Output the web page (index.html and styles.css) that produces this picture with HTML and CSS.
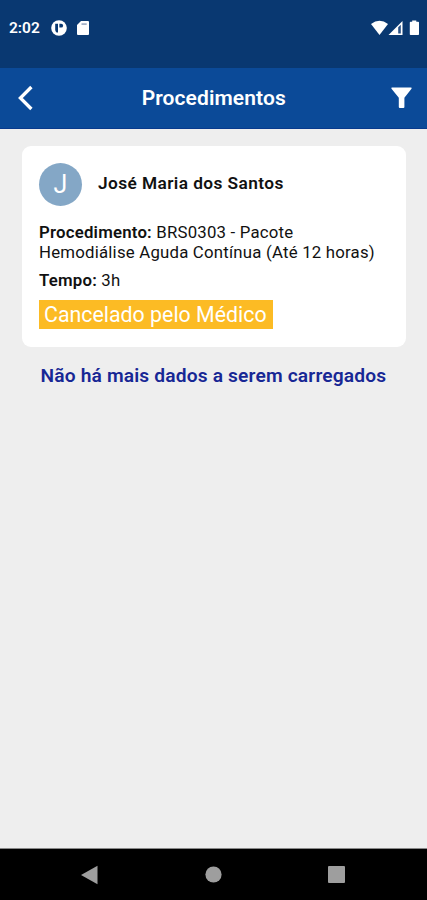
FILE: index.html
```html
<!DOCTYPE html>
<html lang="pt-BR">
<head>
<meta charset="utf-8">
<title>Procedimentos</title>
<link rel="stylesheet" href="styles.css">
</head>
<body>
<div class="status">
  <span class="clock">2:02</span>
  <svg class="app-icon" width="16" height="16" viewBox="0 0 16 16"><circle cx="8" cy="8" r="7.8" fill="#fff"/><path d="M4.2 3.8H7V12.5H5.6Q4.2 11.5 4.2 9.8Z" fill="#093871"/><path d="M8.4 3.8H10.2A1.9 1.9 0 0 1 10.2 7.6H8.4Z" fill="#093871"/></svg>
  <svg class="sd-icon" width="12" height="14" viewBox="0 0 12 14"><path d="M4 0H11Q12 0 12 1V13Q12 14 11 14H1Q0 14 0 13V4Z" fill="#fff"/><path d="M4.5 2.2H9.7V4H4.5Z" fill="#a5b2c8"/></svg>
  <svg class="signals" width="50" height="16" viewBox="0 0 50 16"><path d="M0 4Q8.5-2.6 17 4L8.5 15Z" fill="#fff"/><path d="M17.5 15L31.5 1V15Z" fill="#fff"/><path d="M27.2 7.2L29.8 4.8V13.4H27.2Z" fill="#264f85"/><path d="M38.8 2.6Q38.8 1.8 39.6 1.8H41.2V.4H45.3V1.8H47.2Q48 1.8 48 2.6V14.2Q48 15 47.2 15H39.6Q38.8 15 38.8 14.2Z" fill="#fff"/></svg>
</div>
<header class="bar">
  <svg class="back" width="16" height="26" viewBox="0 0 16 26"><path d="M13.4 2L2.4 13L13.4 24" fill="none" stroke="#fff" stroke-width="3.3"/></svg>
  <h1>Procedimentos</h1>
  <svg class="filter" width="21" height="22" viewBox="0 0 21 22"><path d="M.8.5H20.2Q21 .7 20.5 1.8L13.4 10.8V20Q13.4 21 12.4 21H8.8Q7.8 21 7.8 20V10.8L.5 1.8Q0 .7 .8 .5Z" fill="#fff"/></svg>
</header>
<main>
  <section class="card">
    <div class="person"><span class="avatar">J</span><span class="name">José Maria dos Santos</span></div>
    <p class="proc"><b>Procedimento:</b> BRS0303 - Pacote<br>Hemodiálise Aguda Contínua (Até 12 horas)</p>
    <p class="time"><b>Tempo:</b> 3h</p>
    <span class="tag">Cancelado pelo Médico</span>
  </section>
  <p class="end">Não há mais dados a serem carregados</p>
</main>
<nav class="nav">
  <svg width="17" height="20" viewBox="0 0 17 20"><path d="M0 10L16.5 .8V19.2Z" fill="#9e9e9e"/></svg>
  <svg width="17" height="17" viewBox="0 0 17 17"><circle cx="8.5" cy="8.5" r="8.1" fill="#9e9e9e"/></svg>
  <svg width="17" height="17" viewBox="0 0 17 17"><rect width="17" height="17" rx="1" fill="#9e9e9e"/></svg>
</nav>
</body>
</html>
```
FILE: styles.css
```css
* { box-sizing: border-box; }
body { margin: 0; width: 427px; height: 900px; display: flex; flex-direction: column; font-family: Roboto, sans-serif; background: #eee; color: #111; overflow: hidden; }
p, h1 { margin: 0; white-space: nowrap; }
b { font-weight: 600; }
.status { height: 68px; background: #093871; display: flex; align-items: center; padding: 0 6px 13px 9px; color: #fff; }
.clock { font-size: 15.5px; font-weight: 600; width: 42px; }
.sd-icon { margin-left: 10px; }
.signals { margin-left: auto; }
.bar { height: 61px; background: #0b4a98; border-bottom: 1px solid #083a8d; display: flex; align-items: center; justify-content: space-between; padding: 0 15px 0 17.5px; color: #fff; }
h1 { font-size: 21px; font-weight: 600; line-height: 24px; letter-spacing: .1px; margin-left: 3px; }
main { flex: 1; padding: 17px 21px 0 22px; }
.card { height: 201px; background: #fff; border-radius: 9px; padding: 16.5px 17px; }
.person { display: flex; align-items: center; height: 43px; }
.avatar { width: 43px; height: 43px; border-radius: 50%; background: #84a7c6; color: #fff; font-size: 25px; line-height: 43px; text-align: center; }
.name { margin: 0 0 3px 16px; font-size: 17.3px; font-weight: 600; letter-spacing: .42px; }
.proc { margin-top: 16.5px; font-size: 16.8px; line-height: 20px; letter-spacing: .21px; }
.time { margin-top: 8px; font-size: 16.8px; line-height: 20px; letter-spacing: .21px; }
.tag { display: block; width: 234px; height: 29px; margin-top: 10px; padding-left: 5px; background: #fcbb24; color: #fff; font-size: 21.35px; line-height: 30px; white-space: nowrap; }
.end { margin-top: 16px; padding-left: 18.5px; color: #172795; font-size: 19.2px; font-weight: 600; line-height: 26px; letter-spacing: .16px; }
.nav { height: 52px; background: #000; border-top: 1px solid #888; display: flex; align-items: center; justify-content: space-between; padding: 0 82px 0 81px; }
```
